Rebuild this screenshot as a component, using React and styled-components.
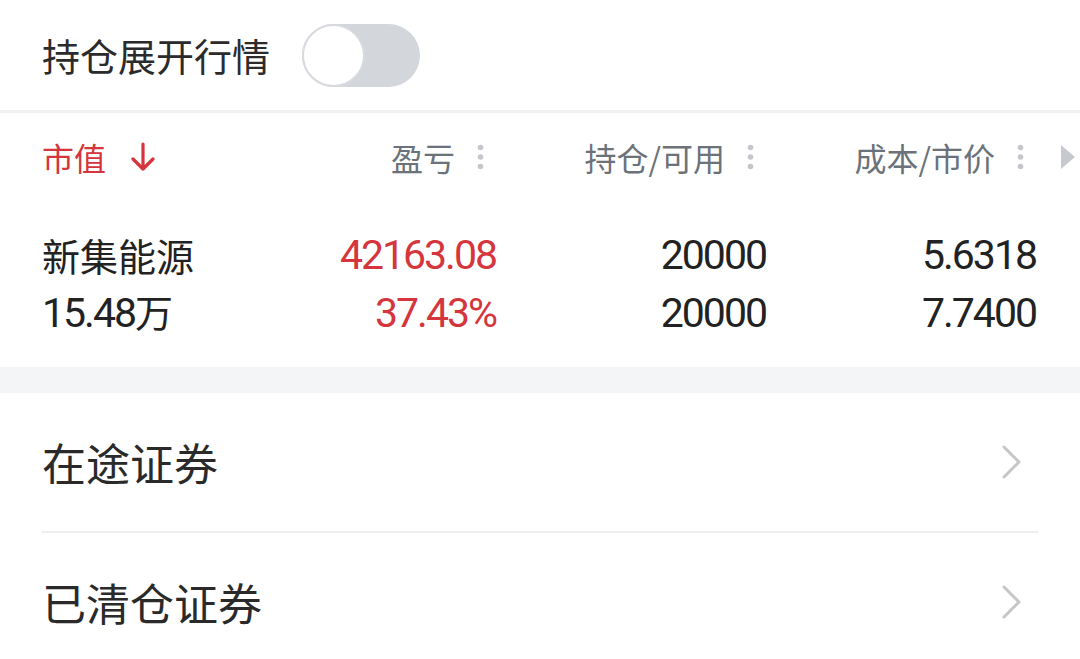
import React from 'react';
import styled, { createGlobalStyle } from 'styled-components';

const GlobalStyle = createGlobalStyle`
  html, body { margin: 0; padding: 0; background: #fff; }
  body { font-family: Roboto, "Noto Sans CJK SC", sans-serif; -webkit-font-smoothing: antialiased; }
`;

const CJK = `"Noto Sans CJK SC", sans-serif`;
const NUM = `Roboto, "Noto Sans CJK SC", sans-serif`;
const RED = '#d5353c';

const Page = styled.div`
  width: 1080px;
  height: 659px;
  overflow: hidden;
  background: #fff;
`;

const ToggleRow = styled.div`
  height: 110px;
  display: flex;
  align-items: center;
  gap: 32px;
  padding-left: 42px;
  border-bottom: 3px solid #f0f1f3;
`;

const ToggleLabel = styled.span`
  font-family: ${CJK};
  font-size: 38px;
  color: #2b2b2b;
  line-height: 1;
`;

const Switch = styled.div`
  position: relative;
  width: 118px;
  height: 63px;
  border-radius: 32px;
  background: #d3d6db;
`;

const Knob = styled.div`
  position: absolute;
  left: 0;
  top: 0;
  width: 63px;
  height: 63px;
  box-sizing: border-box;
  border-radius: 50%;
  background: #fff;
  border: 2px solid #d8dadf;
`;

const cols = '184px 270px 270px 270px';

const HeaderRow = styled.div`
  height: 87px;
  display: grid;
  grid-template-columns: ${cols} 1fr;
  align-items: center;
  padding-left: 42px;
`;

const HeaderCell = styled.div`
  display: flex;
  align-items: center;
  justify-content: ${(p) => (p.$left ? 'flex-start' : 'flex-end')};
  gap: ${(p) => (p.$left ? '25px' : '22px')};
  padding-right: ${(p) => (p.$left ? '0' : '12px')};
  font-family: ${CJK};
  font-size: 32px;
  line-height: 1;
  color: ${(p) => (p.$active ? RED : '#6b7279')};
`;

const MoreCell = styled.div`
  display: flex;
  align-items: center;
  padding-left: 24px;
`;

const DataBlock = styled.div`
  padding: 26px 0 25px 42px;
`;

const DataRow = styled.div`
  height: 58px;
  display: grid;
  grid-template-columns: ${cols};
  align-items: center;
`;

const NameCell = styled.div`
  font-family: ${CJK};
  font-size: 38px;
  line-height: 1;
  color: #222;
  white-space: nowrap;
`;

const Num = styled.span`
  font-family: ${NUM};
  font-size: 41px;
  letter-spacing: -2px;
`;

const Unit = styled.span`
  font-family: ${CJK};
  font-size: 38px;
`;

const ValueCell = styled.div`
  text-align: right;
  font-family: ${NUM};
  font-size: 41px;
  letter-spacing: -2px;
  line-height: 1;
  color: ${(p) => (p.$red ? RED : '#222')};
  white-space: nowrap;
`;

const Band = styled.div`
  height: 26px;
  background: #f4f5f7;
`;

const List = styled.div`
  padding: 0 42px;
`;

const ListItem = styled.div`
  height: 138px;
  display: flex;
  align-items: center;
  justify-content: space-between;
  border-bottom: ${(p) => (p.$last ? 'none' : '2px solid #eeeeee')};
`;

const ListLabel = styled.span`
  font-family: ${CJK};
  font-size: 44px;
  line-height: 1;
  color: #2a2a2a;
`;

const ChevronWrap = styled.span`
  display: flex;
  margin-right: 17px;
`;

const Dots = () => (
  <svg width="7" height="28" viewBox="0 0 7 28">
    <circle cx="3.5" cy="4.5" r="2.8" fill="#c3c6cb" />
    <circle cx="3.5" cy="14" r="2.8" fill="#c3c6cb" />
    <circle cx="3.5" cy="23.5" r="2.8" fill="#c3c6cb" />
  </svg>
);

const DownArrow = () => (
  <svg width="24" height="30" viewBox="0 0 24 30">
    <path d="M12 2 V27 M2 17 L12 27 L22 17" fill="none" stroke={RED} strokeWidth="3.2" strokeLinecap="round" strokeLinejoin="round" />
  </svg>
);

const Triangle = () => (
  <svg width="16" height="26" viewBox="0 0 16 26">
    <polygon points="1,1 15,13 1,25" fill="#c6c9ce" />
  </svg>
);

const Chevron = () => (
  <ChevronWrap>
    <svg width="19" height="34" viewBox="0 0 19 34">
      <path d="M2 2 L17 17 L2 32" fill="none" stroke="#c6c6c6" strokeWidth="3" strokeLinecap="round" strokeLinejoin="round" />
    </svg>
  </ChevronWrap>
);

const headers = ['盈亏', '持仓/可用', '成本/市价'];

export default function App() {
  return (
    <>
      <GlobalStyle />
      <Page>
        <ToggleRow>
          <ToggleLabel>持仓展开行情</ToggleLabel>
          <Switch>
            <Knob />
          </Switch>
        </ToggleRow>

        <HeaderRow>
          <HeaderCell $left $active>
            <span>市值</span>
            <DownArrow />
          </HeaderCell>
          {headers.map((h) => (
            <HeaderCell key={h}>
              <span>{h}</span>
              <Dots />
            </HeaderCell>
          ))}
          <MoreCell>
            <Triangle />
          </MoreCell>
        </HeaderRow>

        <DataBlock>
          <DataRow>
            <NameCell>新集能源</NameCell>
            <ValueCell $red>42163.08</ValueCell>
            <ValueCell>20000</ValueCell>
            <ValueCell>5.6318</ValueCell>
          </DataRow>
          <DataRow>
            <NameCell>
              <Num>15.48</Num>
              <Unit>万</Unit>
            </NameCell>
            <ValueCell $red>37.43%</ValueCell>
            <ValueCell>20000</ValueCell>
            <ValueCell>7.7400</ValueCell>
          </DataRow>
        </DataBlock>

        <Band />

        <List>
          <ListItem>
            <ListLabel>在途证券</ListLabel>
            <Chevron />
          </ListItem>
          <ListItem $last>
            <ListLabel>已清仓证券</ListLabel>
            <Chevron />
          </ListItem>
        </List>
      </Page>
    </>
  );
}
